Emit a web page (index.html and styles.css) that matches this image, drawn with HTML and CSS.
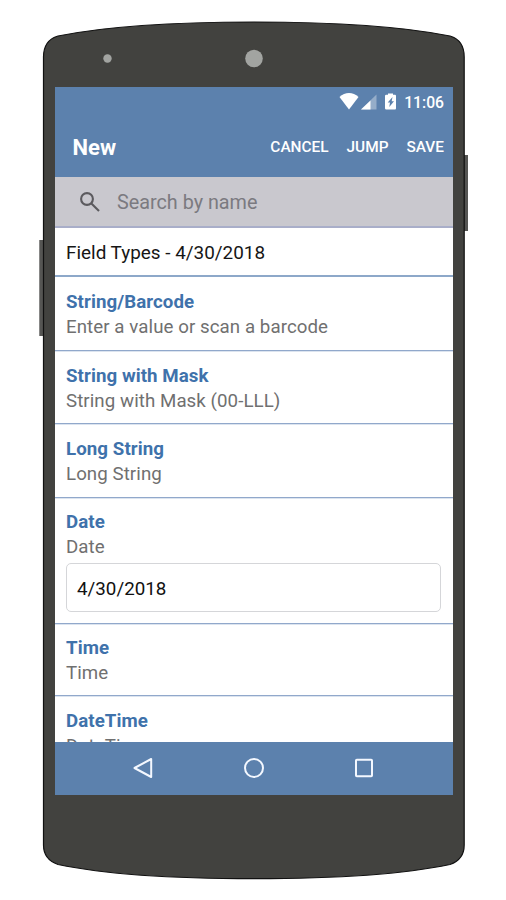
FILE: index.html
```html
<!DOCTYPE html>
<html lang="en">
<head>
<meta charset="utf-8">
<title>New</title>
<link rel="stylesheet" href="styles.css">
</head>
<body>
<div class="stage">
  <svg class="device" width="506" height="900" viewBox="0 0 506 900" aria-hidden="true">
    <rect x="39.3" y="240" width="6" height="96" fill="#555553"/>
    <rect x="462" y="155" width="6" height="76" fill="#555553"/>
    <path d="M43.5 57C43.500 46 48 39 58 36C108 26 182 22 254 22S400 26 450 36C460 39 464.200 46 464.200 57V845C464.200 854 460 861 450 864.500C400 875 326 878.700 254 878.700S108 875 58 864.500C48 861 43.500 854 43.500 845Z" fill="#42423f" stroke="#111" stroke-width="1.200"/>
    <circle cx="107.500" cy="58.500" r="4.200" fill="#a2a4a1"/>
    <circle cx="254" cy="58.500" r="8.800" fill="#a2a4a1"/>
  </svg>
  <main class="screen">
    <div class="status">
      <svg width="60" height="20" viewBox="0 0 60 20" fill="#fff">
        <path d="M.5 5C6-.2 14-.2 19.500 5L10 17.500Z"/>
        <path d="M37.500 2.500V17.500H22Z" opacity=".35"/>
        <path d="M31.500 8.500V17.500H22Z"/>
        <path fill-rule="evenodd" d="M49 2.800V1.500H54V2.800H56Q57 2.800 57 4V16.200Q57 17.500 56 17.500H47.300Q46 17.500 46 16.200V4Q46 2.800 47.300 2.800ZM53.500 5L48.700 10.500H51L50.300 15L55 9.300H52.700Z"/>
      </svg>
      <span class="clock">11:06</span>
    </div>
    <header class="toolbar">
      <h1>New</h1>
      <nav class="actions"><span>CANCEL</span><span>JUMP</span><span>SAVE</span></nav>
    </header>
    <div class="search">
      <svg width="22" height="22" viewBox="0 0 22 22" fill="none" stroke="#5b5a5e" stroke-width="2.100"><circle cx="8" cy="8" r="5.900"/><path d="M12.400 12.400L20 20"/></svg>
      <span>Search by name</span>
    </div>
    <div class="list">
      <div class="record"><span>Field Types - 4/30/2018</span></div>
      <section class="field"><h2>String/Barcode</h2><p>Enter a value or scan a barcode</p></section>
      <section class="field short"><h2>String with Mask</h2><p>String with Mask (00-LLL)</p></section>
      <section class="field"><h2>Long String</h2><p>Long String</p></section>
      <section class="field dated"><h2>Date</h2><p>Date</p><div class="input">4/30/2018</div></section>
      <section class="field time"><h2>Time</h2><p>Time</p></section>
      <section class="field"><h2>DateTime</h2><p>DateTime</p></section>
    </div>
    <footer class="navbar">
      <svg width="22" height="22" viewBox="0 0 22 22"><path d="M19.200 2V20L2.500 11Z"/></svg>
      <svg width="22" height="22" viewBox="0 0 22 22"><circle cx="11" cy="11" r="9"/></svg>
      <svg width="22" height="22" viewBox="0 0 22 22"><rect x="3" y="2.700" width="16" height="16.600" rx=".8"/></svg>
    </footer>
  </main>
</div>
</body>
</html>
```
FILE: styles.css
```css
* { box-sizing: border-box; }
body { margin: 0; background: #fff; font-family: Roboto, "Liberation Sans", sans-serif; }
.stage { display: grid; width: 506px; height: 900px; overflow: hidden; }
.device, .screen { grid-area: 1 / 1; }
.screen {
  display: flex;
  flex-direction: column;
  width: 398px;
  height: 708px;
  margin: 87px 0 0 55px;
  background: #fff;
  overflow: hidden;
  z-index: 1;
}
.status {
  display: flex;
  align-items: center;
  justify-content: flex-end;
  gap: 5.500px;
  height: 30px;
  flex: none;
  padding-right: 9px;
  background: #5c81ad;
  color: #fff;
}
.status svg { margin-top: -1px; }
.clock { padding-top: 1px; font-size: 15.700px; font-weight: 500; line-height: 20px; }
.toolbar {
  display: flex;
  align-items: center;
  justify-content: space-between;
  height: 60px;
  flex: none;
  padding: 0 9px 0 17.500px;
  background: #5c81ad;
  color: #fff;
}
h1, h2, p { margin: 0; }
h1 { padding-top: 1px; font-size: 22px; font-weight: 700; line-height: 28px; }
.actions { display: flex; gap: 18px; font-size: 15.400px; font-weight: 500; line-height: 20px; }
.search {
  display: flex;
  align-items: center;
  gap: 16px;
  height: 51px;
  flex: none;
  padding-left: 24px;
  border-bottom: 2px solid #a9aec9;
  background: #c9c8ce;
  color: #7b7a80;
  font-size: 19.800px;
}
.search span { padding-top: 1px; }
.list { flex: 1; min-height: 0; overflow: hidden; }
.record {
  display: flex;
  align-items: center;
  height: 49px;
  padding: 1px 11px 0;
  border-bottom: 2px solid #8da8c9;
  color: #161616;
  font-size: 18.900px;
}
.field {
  height: 74px;
  padding: 13px 11px 0;
  border-bottom: 1px solid #91a8cb;
  box-shadow: 0 1px #dce4ef;
}
.short { height: 73px; }
.dated { height: 126px; padding-top: 12px; }
.time { height: 72px; padding-top: 12px; }
h2 { color: #3f72ab; font-size: 18.700px; font-weight: 700; line-height: 25px; letter-spacing: .07px; }
p { color: #707070; font-size: 18.700px; line-height: 25px; letter-spacing: .07px; }
.input {
  display: flex;
  align-items: center;
  width: 375px;
  height: 49px;
  margin-top: 3px;
  padding: 2px 10px 0;
  border: 1px solid #d5d6d9;
  border-radius: 5px;
  color: #111;
  font-size: 18.800px;
}
.navbar {
  display: flex;
  align-items: center;
  justify-content: center;
  gap: 88.500px;
  height: 53px;
  flex: none;
  padding: 0 1px 1px 0;
  background: #5c81ad;
}
.navbar svg { fill: none; stroke: #f4f8ff; stroke-width: 2; stroke-linejoin: round; }
```
